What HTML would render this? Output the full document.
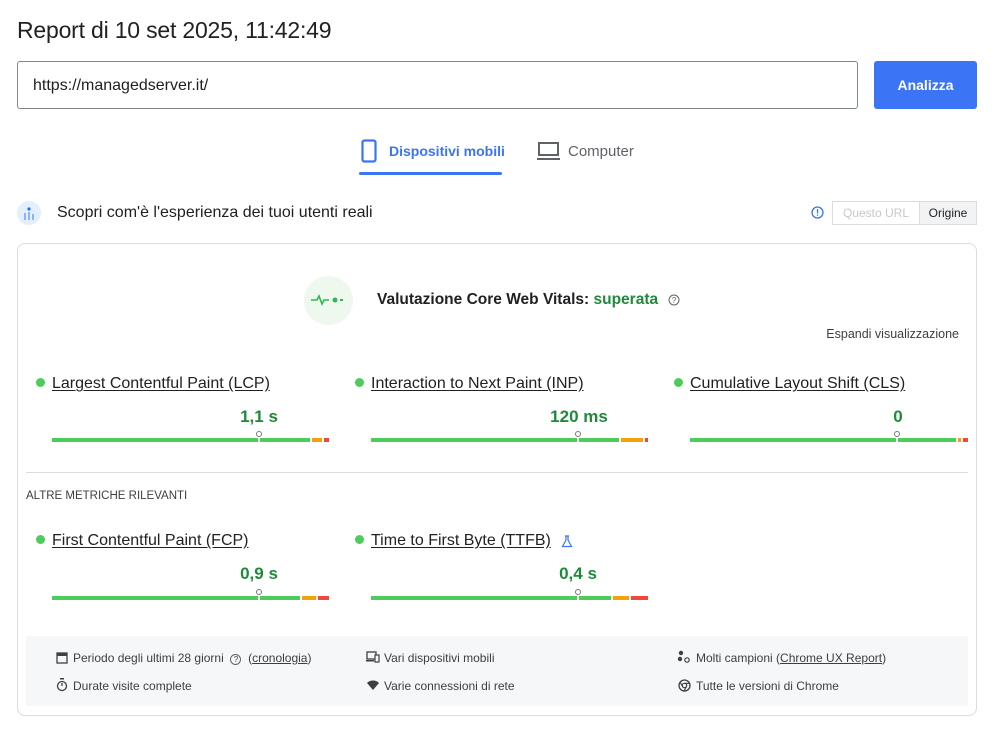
<!DOCTYPE html>
<html><head><meta charset="utf-8"><style>
*{margin:0;padding:0;box-sizing:border-box}
body{width:1000px;height:738px;background:#fff;font-family:"Liberation Sans",Arial,sans-serif;color:#202124;position:relative;overflow:hidden}
.a{position:absolute;white-space:nowrap}
.bar{position:absolute;height:4px}
.g{background:#4ccc5b}.o{background:#f4a10a}.r{background:#f0483c}
.mk{position:absolute;width:2px;height:8px;background:#fff}
.mk:after{content:"";position:absolute;left:-2px;top:-5px;width:4px;height:4px;border:1px solid #777;border-radius:50%;background:#fff}
.lab{font-size:16px;text-decoration:underline;color:#202124;text-underline-offset:2px}
.dot{position:absolute;width:9px;height:9px;border-radius:50%;background:#4ccc5b}
.val{font-size:17px;font-weight:bold;color:#1e8a3a;transform:translateX(-50%)}
.ft{font-size:12px;color:#3c4043}
</style></head><body>
<div class="a" style="left:17px;top:17px;font-size:23px;letter-spacing:-0.2px;color:#202124">Report di 10 set 2025, 11:42:49</div>
<div class="a" style="left:17px;top:61px;width:841px;height:48px;border:1px solid #80868b;border-radius:3px"></div>
<div class="a" style="left:33px;top:77px;font-size:16px">https://managedserver.it/</div>
<div class="a" style="left:874px;top:61px;width:103px;height:48px;background:#3b74f5;border-radius:3px;color:#fff;font-size:14px;font-weight:bold;text-align:center;line-height:48px">Analizza</div>

<svg class="a" style="left:361px;top:139px" width="16" height="24" viewBox="0 0 16 24"><rect x="1.5" y="1.5" width="13" height="21" rx="2" fill="none" stroke="#3b74f5" stroke-width="2.2"/></svg>
<div class="a" style="left:389px;top:143px;font-size:14px;color:#3b74f5;font-weight:bold">Dispositivi mobili</div>
<div class="a" style="left:359px;top:172px;width:143px;height:3px;background:#3b74f5;border-radius:2px"></div>
<svg class="a" style="left:537px;top:141px" width="24" height="20" viewBox="0 0 24 20"><rect x="2" y="2" width="19" height="12" fill="none" stroke="#5f6368" stroke-width="2"/><rect x="0" y="17" width="23" height="2" fill="#5f6368"/></svg>
<div class="a" style="left:568px;top:143px;font-size:15px;color:#5f6368">Computer</div>

<div class="a" style="left:17px;top:201px;width:24px;height:24px;border-radius:50%;background:#e3efff"></div>
<svg class="a" style="left:22px;top:205px" width="14" height="16" viewBox="0 0 14 16"><circle cx="7" cy="4" r="1.6" fill="#1a73e8"/><rect x="2" y="8" width="2" height="7" fill="#8ab4f8"/><rect x="6" y="7" width="2" height="8" fill="#8ab4f8"/><rect x="10" y="9" width="2" height="6" fill="#8ab4f8"/></svg>
<div class="a" style="left:57px;top:204px;font-size:16px">Scopri com'è l'esperienza dei tuoi utenti reali</div>
<svg class="a" style="left:811px;top:206px" width="13" height="13" viewBox="0 0 13 13"><circle cx="6.5" cy="6.5" r="5.5" fill="none" stroke="#3b74f5" stroke-width="1.3"/><rect x="5.9" y="3" width="1.3" height="4.5" fill="#3b74f5"/><rect x="5.9" y="8.5" width="1.3" height="1.3" fill="#3b74f5"/></svg>
<div class="a" style="left:832px;top:201px;width:88px;height:24px;border:1px solid #dadce0;font-size:12px;color:#c8c8c8;line-height:22px;text-align:center">Questo URL</div>
<div class="a" style="left:919px;top:201px;width:58px;height:24px;border:1px solid #dadce0;background:#f1f3f4;font-size:12px;color:#202124;line-height:22px;text-align:center">Origine</div>

<div class="a" style="left:17px;top:243px;width:960px;height:473px;border:1px solid #dadce0;border-radius:8px"></div>
<div class="a" style="left:304px;top:276px;width:49px;height:49px;border-radius:50%;background:#eef8ee"></div>
<svg class="a" style="left:310px;top:292px" width="38" height="16" viewBox="0 0 38 16"><path d="M1 8h6l2-4 3 8 2-4h5" fill="none" stroke="#2fb84f" stroke-width="1.6"/><circle cx="25" cy="8" r="2.5" fill="#2fb84f"/><rect x="30" y="7" width="3" height="2" fill="#2fb84f"/></svg>
<div class="a" style="left:377px;top:291px;font-size:15.5px;font-weight:bold;color:#202124">Valutazione Core Web Vitals: <span style="color:#1e8a3a">superata</span></div>
<svg class="a" style="left:668px;top:294px" width="12" height="12" viewBox="0 0 12 12"><circle cx="6" cy="6" r="5" fill="none" stroke="#5f6368" stroke-width="1"/><text x="6" y="9" font-size="8" text-anchor="middle" fill="#5f6368" font-family="Liberation Sans">?</text></svg>
<div class="a" style="right:41px;top:327px;font-size:12.5px;color:#3c4043">Espandi visualizzazione</div>

<div class="dot" style="left:36px;top:378px"></div>
<div class="a lab" style="left:52px;top:375px">Largest Contentful Paint (LCP)</div>
<div class="a val" style="left:259px;top:407px">1,1 s</div>
<div class="bar g" style="left:52px;top:438px;width:258px"></div><div class="bar o" style="left:312px;top:438px;width:10px"></div><div class="bar r" style="left:324px;top:438px;width:5px"></div>
<div class="mk" style="left:258px;top:436px"></div>

<div class="dot" style="left:355px;top:378px"></div>
<div class="a lab" style="left:371px;top:375px">Interaction to Next Paint (INP)</div>
<div class="a val" style="left:579px;top:407px">120 ms</div>
<div class="bar g" style="left:371px;top:438px;width:248px"></div><div class="bar o" style="left:621px;top:438px;width:22px"></div><div class="bar r" style="left:645px;top:438px;width:3px"></div>
<div class="mk" style="left:577px;top:436px"></div>

<div class="dot" style="left:674px;top:378px"></div>
<div class="a lab" style="left:690px;top:375px">Cumulative Layout Shift (CLS)</div>
<div class="a val" style="left:898px;top:407px">0</div>
<div class="bar g" style="left:690px;top:438px;width:266px"></div><div class="bar o" style="left:958px;top:438px;width:3px"></div><div class="bar r" style="left:963px;top:438px;width:5px"></div>
<div class="mk" style="left:896px;top:436px"></div>

<div class="a" style="left:26px;top:472px;width:942px;height:1px;background:#dadce0"></div>
<div class="a" style="left:26px;top:490px;font-size:11.5px;color:#3c4043">ALTRE METRICHE RILEVANTI</div>

<div class="dot" style="left:36px;top:535px"></div>
<div class="a lab" style="left:52px;top:532px">First Contentful Paint (FCP)</div>
<div class="a val" style="left:259px;top:564px">0,9 s</div>
<div class="bar g" style="left:52px;top:596px;width:248px"></div><div class="bar o" style="left:302px;top:596px;width:14px"></div><div class="bar r" style="left:318px;top:596px;width:11px"></div>
<div class="mk" style="left:258px;top:594px"></div>

<div class="dot" style="left:355px;top:535px"></div>
<div class="a lab" style="left:371px;top:532px">Time to First Byte (TTFB)</div>
<svg class="a" style="left:561px;top:535px" width="12" height="13" viewBox="0 0 12 13"><path d="M4 1h4M5 1v4L1.5 11.5h9L7 5V1" fill="none" stroke="#3b74f5" stroke-width="1.2"/></svg>
<div class="a val" style="left:578px;top:564px">0,4 s</div>
<div class="bar g" style="left:371px;top:596px;width:240px"></div><div class="bar o" style="left:613px;top:596px;width:16px"></div><div class="bar r" style="left:631px;top:596px;width:17px"></div>
<div class="mk" style="left:577px;top:594px"></div>

<div class="a" style="left:26px;top:636px;width:942px;height:70px;background:#f6f7f8;border-radius:2px"></div>
<svg class="a" style="left:56px;top:651px" width="12" height="13" viewBox="0 0 12 13"><rect x="1" y="2" width="10" height="10" fill="none" stroke="#3c4043" stroke-width="1.3"/><rect x="1" y="2" width="10" height="3" fill="#3c4043"/></svg>
<div class="a ft" style="left:73px;top:651px">Periodo degli ultimi 28 giorni &nbsp;<span style="border:1px solid #5f6368;border-radius:50%;display:inline-block;width:11px;height:11px;font-size:8px;text-align:center;line-height:10px">?</span> &nbsp;(<u>cronologia</u>)</div>
<svg class="a" style="left:56px;top:678px" width="12" height="14" viewBox="0 0 12 14"><rect x="4" y="0" width="4" height="1.5" fill="#3c4043"/><circle cx="6" cy="8" r="4.5" fill="none" stroke="#3c4043" stroke-width="1.3"/><path d="M6 5v3" stroke="#3c4043" stroke-width="1.3"/></svg>
<div class="a ft" style="left:73px;top:679px">Durate visite complete</div>
<svg class="a" style="left:366px;top:651px" width="14" height="12" viewBox="0 0 14 12"><rect x="1" y="1" width="9" height="7" fill="none" stroke="#3c4043" stroke-width="1.3"/><rect x="0" y="9" width="8" height="1.5" fill="#3c4043"/><rect x="9" y="4" width="4" height="7" fill="#f6f7f8" stroke="#3c4043" stroke-width="1.2"/></svg>
<div class="a ft" style="left:384px;top:651px">Vari dispositivi mobili</div>
<svg class="a" style="left:366px;top:679px" width="14" height="12" viewBox="0 0 14 12"><path d="M1 4a8.5 8.5 0 0 1 12 0L7 11z" fill="#3c4043"/></svg>
<div class="a ft" style="left:384px;top:679px">Varie connessioni di rete</div>
<svg class="a" style="left:677px;top:650px" width="14" height="14" viewBox="0 0 14 14"><circle cx="4" cy="3" r="2.2" fill="#3c4043"/><circle cx="3" cy="9" r="2.2" fill="#3c4043"/><circle cx="10" cy="10" r="2.2" fill="none" stroke="#3c4043" stroke-width="1.2"/></svg>
<div class="a ft" style="left:696px;top:651px">Molti campioni (<u>Chrome UX Report</u>)</div>
<svg class="a" style="left:678px;top:679px" width="13" height="13" viewBox="0 0 13 13"><circle cx="6.5" cy="6.5" r="5.5" fill="none" stroke="#3c4043" stroke-width="1.3"/><circle cx="6.5" cy="6.5" r="2.2" fill="none" stroke="#3c4043" stroke-width="1.2"/><path d="M6.5 4.3h5M4.6 7.6L2 3M8.4 7.6L6 12" stroke="#3c4043" stroke-width="1.1"/></svg>
<div class="a ft" style="left:696px;top:679px">Tutte le versioni di Chrome</div>
</body></html>
